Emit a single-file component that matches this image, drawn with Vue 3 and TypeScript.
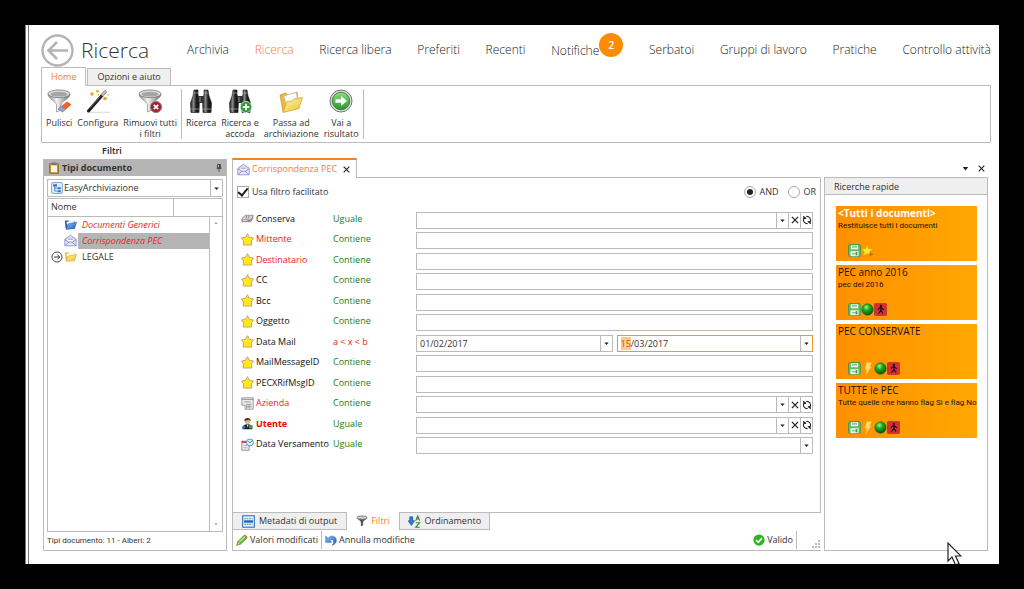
<script setup lang="ts">
import { onMounted, ref } from 'vue'

interface RibbonAction { icon: string; lines: string[] }
interface FilterRow {
  id: string
  label: string
  icon: string
  operator: string
  kind: 'text' | 'lookup' | 'drop' | 'range'
  tone?: 'red' | 'strong'
}
interface QuickSearch { title: string; note: string; icons: string[]; bold?: boolean }

const navBefore = ['Archivia', 'Ricerca', 'Ricerca libera', 'Preferiti', 'Recenti']
const navAfter = ['Serbatoi', 'Gruppi di lavoro', 'Pratiche', 'Controllo attività']

const ribbon: RibbonAction[][] = [
  [
    { icon: 'funnel-clean', lines: ['Pulisci'] },
    { icon: 'wand', lines: ['Configura'] },
    { icon: 'funnel-remove', lines: ['Rimuovi tutti', 'i filtri'] },
  ],
  [
    { icon: 'binoculars', lines: ['Ricerca'] },
    { icon: 'binoculars-add', lines: ['Ricerca e', 'accoda'] },
    { icon: 'folder-open', lines: ['Passa ad', 'archiviazione'] },
    { icon: 'go', lines: ['Vai a', 'risultato'] },
  ],
]

const tree = [
  { name: 'Documenti Generici', icon: 'folder-blue', red: true, selected: false, expandable: false },
  { name: 'Corrispondenza PEC', icon: 'mail', red: true, selected: true, expandable: false },
  { name: 'LEGALE', icon: 'folder-small', red: false, selected: false, expandable: true },
]

const filters: FilterRow[] = [
  { id: 'conserva', label: 'Conserva', icon: 'drive', operator: 'Uguale', kind: 'lookup' },
  { id: 'mittente', label: 'Mittente', icon: 'star', operator: 'Contiene', kind: 'text', tone: 'red' },
  { id: 'destinatario', label: 'Destinatario', icon: 'star', operator: 'Contiene', kind: 'text', tone: 'red' },
  { id: 'cc', label: 'CC', icon: 'star', operator: 'Contiene', kind: 'text' },
  { id: 'bcc', label: 'Bcc', icon: 'star', operator: 'Contiene', kind: 'text' },
  { id: 'oggetto', label: 'Oggetto', icon: 'star', operator: 'Contiene', kind: 'text' },
  { id: 'datamail', label: 'Data Mail', icon: 'star', operator: 'a < x < b', kind: 'range' },
  { id: 'messageid', label: 'MailMessageID', icon: 'star', operator: 'Contiene', kind: 'text' },
  { id: 'rifmsgid', label: 'PECXRifMsgID', icon: 'star', operator: 'Contiene', kind: 'text' },
  { id: 'azienda', label: 'Azienda', icon: 'form', operator: 'Contiene', kind: 'lookup', tone: 'red' },
  { id: 'utente', label: 'Utente', icon: 'user', operator: 'Uguale', kind: 'lookup', tone: 'strong' },
  { id: 'versamento', label: 'Data Versamento', icon: 'date', operator: 'Uguale', kind: 'drop' },
]

const quick: QuickSearch[] = [
  { title: '<Tutti i documenti>', note: 'Restituisce tutti i documenti', icons: ['save', 'star-add'], bold: true },
  { title: 'PEC anno 2016', note: 'pec del 2016', icons: ['save', 'ball', 'exit'] },
  { title: 'PEC CONSERVATE', note: '', icons: ['save', 'bolt', 'ball', 'exit'] },
  { title: 'TUTTE le PEC', note: 'Tutte quelle che hanno flag Sì e flag No', icons: ['save', 'bolt', 'ball', 'exit'] },
]

const easyFilter = ref(true)
const mode = ref<'AND' | 'OR'>('AND')
const dateFrom = ref('01/02/2017')
const dateTo = ref('15/03/2017')
const dateToInput = ref<HTMLInputElement[]>([])

onMounted(() => {
  const field = dateToInput.value[0]
  field?.focus()
  field?.setSelectionRange(0, 2)
})
</script>

<template>
  <svg class="defs" aria-hidden="true">
    <defs>
      <linearGradient id="g-metal" x1="0" x2="1" y1="0" y2="0">
        <stop offset="0" stop-color="#8a8a8a" /><stop offset=".4" stop-color="#f4f4f4" /><stop offset="1" stop-color="#6a6a6a" />
      </linearGradient>
      <linearGradient id="g-folder" x1="0" x2="1" y1="0" y2="1">
        <stop offset="0" stop-color="#fff3a0" /><stop offset="1" stop-color="#edc23c" />
      </linearGradient>
      <linearGradient id="g-blue" x1="0" x2="1" y1="0" y2="1">
        <stop offset="0" stop-color="#8fc4f2" /><stop offset="1" stop-color="#1f58b5" />
      </linearGradient>
      <linearGradient id="g-dark" x1="0" x2="1" y1="0" y2="0">
        <stop offset="0" stop-color="#1d1d1d" /><stop offset=".35" stop-color="#8a8a8a" /><stop offset=".6" stop-color="#222" /><stop offset="1" stop-color="#111" />
      </linearGradient>
      <radialGradient id="g-ball" cx=".4" cy=".3" r=".7">
        <stop offset="0" stop-color="#a8f08a" /><stop offset=".4" stop-color="#1fae1f" /><stop offset="1" stop-color="#04580a" />
      </radialGradient>
      <linearGradient id="g-go" x1="0" x2="0" y1="0" y2="1">
        <stop offset="0" stop-color="#8ede7d" /><stop offset="1" stop-color="#279332" />
      </linearGradient>
    </defs>
    <symbol id="funnel" viewBox="0 0 24 24">
      <path d="M1 5C1 10 9 12 9.500 16V23L14 21V16C14 12 23 10 23 5Z" fill="url(#g-metal)" stroke="#777" stroke-width=".6" />
      <ellipse cx="12" cy="4.800" rx="11" ry="3.800" fill="#e0e0e0" stroke="#777" stroke-width=".8" />
      <ellipse cx="12" cy="5.200" rx="8.500" ry="2.400" fill="#a5a5a5" />
    </symbol>
    <symbol id="funnel-clean" viewBox="0 0 24 24">
      <use href="#funnel" />
      <path d="M11 20L20 13L24 15.500L15.500 23Z" fill="#f0652a" stroke="#c44312" stroke-width=".6" />
      <path d="M11 20L14 17.600L18.500 20.300L15.500 23Z" fill="#7fa6dd" />
    </symbol>
    <symbol id="wand" viewBox="0 0 24 24">
      <path d="M3 23.300H24" stroke="#ddd" stroke-width="1.200" />
      <path d="M2.500 22L19 3" stroke="#1c1c1c" stroke-width="3" stroke-linecap="round" />
      <path d="M16 6.500L20 1.500" stroke="#b9b9b9" stroke-width="3" />
      <path d="M4.500 18.500L15 6.500" stroke="#777" stroke-width=".8" />
      <g fill="#f0a31c"><circle cx="6" cy="5" r="1.700" /><circle cx="11.500" cy="2.300" r="1.300" /><circle cx="19" cy="9.500" r="1.800" /><circle cx="12.500" cy="5.700" r=".8" /><circle cx="22" cy="6" r=".8" /></g>
    </symbol>
    <symbol id="funnel-remove" viewBox="0 0 24 24">
      <use href="#funnel" />
      <circle cx="18" cy="18" r="5.600" fill="#a3222e" stroke="#888" stroke-width="1" />
      <path d="M15.800 15.800L20.200 20.200M20.200 15.800L15.800 20.200" stroke="#fff" stroke-width="1.700" />
    </symbol>
    <symbol id="binoculars" viewBox="0 0 24 24">
      <path d="M5 1H9V6L10.500 9L10 23.500H2L1.500 14L4 7Z" fill="url(#g-dark)" stroke="#111" stroke-width=".6" />
      <path d="M19 1H15V6L13.500 9L14 23.500H22L22.500 14L20 7Z" fill="url(#g-dark)" stroke="#111" stroke-width=".6" />
      <path d="M9.500 7H14.500V14H9.500Z" fill="#333" /><path d="M11 8V13" stroke="#aaa" stroke-width=".8" />
      <path d="M4.500 4H9.500M14.500 4H19.500M2 20H10M14 20H22" stroke="#aaa" stroke-width=".7" />
    </symbol>
    <symbol id="binoculars-add" viewBox="0 0 24 24">
      <use href="#binoculars" />
      <circle cx="18" cy="18" r="5.600" fill="#2f9a38" stroke="#b8dcb8" stroke-width="1" />
      <path d="M18 14.800V21.200M14.800 18H21.200" stroke="#fff" stroke-width="1.800" />
    </symbol>
    <symbol id="folder-open" viewBox="0 0 24 24">
      <path d="M1 6L7 4L9 6L18 3L20 19L4 23Z" fill="#e9bb3c" stroke="#c99a28" stroke-width=".7" />
      <path d="M5 7L17 3.500L19 13L8 18Z" fill="#fff" stroke="#bbb" stroke-width=".6" />
      <path d="M4 23.500L8 12.500L13 12L15 10L23.500 8.500L20 19.500Z" fill="url(#g-folder)" stroke="#d0a42c" stroke-width=".7" />
    </symbol>
    <symbol id="go" viewBox="0 0 24 24">
      <circle cx="12" cy="12" r="11" fill="#dedede" stroke="#777" stroke-width="1" />
      <circle cx="12" cy="12" r="8.800" fill="url(#g-go)" stroke="#34753a" stroke-width=".8" />
      <path d="M6.500 10.300H12V7L18 12L12 17V13.700H6.500Z" fill="#fff" />
    </symbol>
    <symbol id="clipboard" viewBox="0 0 16 16">
      <rect x="2" y="2" width="12" height="13.500" rx="1" fill="#c98f35" stroke="#85601f" />
      <path d="M4 4.500H12V13.500H4Z" fill="#fff6d8" /><rect x="5" y=".5" width="6" height="3.500" rx="1" fill="#777" />
    </symbol>
    <symbol id="hierarchy" viewBox="0 0 16 16">
      <rect x=".7" y=".7" width="14.600" height="14.600" rx="2" fill="#dcecfb" stroke="#5a92cc" />
      <path d="M5 5V12H9M5 8H9" stroke="#3973b6" fill="none" /><path d="M3 3H8V6H3ZM9 7H13V9.500H9ZM9 11H13V13.500H9Z" fill="#3973b6" />
    </symbol>
    <symbol id="folder-blue" viewBox="0 0 16 16">
      <path d="M1 3H6L7 4H13V13H2Z" fill="#2a5fb0" /><path d="M3 5L12 2L13 8L4 9Z" fill="#eaf3ff" />
      <path d="M2.500 14L5 7.500L15.500 5L13 13Z" fill="url(#g-blue)" stroke="#2355a0" stroke-width=".6" />
    </symbol>
    <symbol id="folder-small" viewBox="0 0 16 16">
      <path d="M1 3H6L7 4H13V13H2Z" fill="#e8bd48" /><path d="M3 5L12 2.500L13 8L4 9Z" fill="#fffbe5" />
      <path d="M2.500 14L5 7.500L15.500 5.500L13 13Z" fill="url(#g-folder)" stroke="#d0a42c" stroke-width=".7" />
    </symbol>
    <symbol id="mail" viewBox="0 0 16 16">
      <path d="M1 6.500L8 1.500L15 6.500V14.500H1Z" fill="#e7e9fb" stroke="#8286c6" />
      <path d="M3.500 9V5H12.500V9L8 11Z" fill="#fff" stroke="#a5a8d8" stroke-width=".7" />
      <path d="M1.500 14L6.500 9.800H9.500L14.500 14M1.300 7L6 10.200M14.700 7L10 10.200M5 6.500H11" fill="none" stroke="#8286c6" />
    </symbol>
    <symbol id="expand" viewBox="0 0 16 16">
      <circle cx="8" cy="8" r="6.700" fill="#fff" stroke="#333" stroke-width="1.200" />
      <path d="M4 8H11.500M8.500 4.800L11.700 8L8.500 11.200" fill="none" stroke="#333" stroke-width="1.300" />
    </symbol>
    <symbol id="drive" viewBox="0 0 16 16">
      <path d="M1 9L5 4H15L14.500 8L12 12H1Z" fill="#a59ea3" stroke="#746d72" stroke-width=".7" /><path d="M1.500 9L5 4.500H14.500L11.500 9Z" fill="#d9d3d6" />
      <path d="M7 5L6 8M10 5L8.500 8" stroke="#857c82" /><path d="M2.500 10.500H7" stroke="#eee" /><circle cx="10" cy="10.500" r=".8" fill="#b44" />
    </symbol>
    <symbol id="star" viewBox="0 0 16 16">
      <path d="M8 .8L10.300 5.200L15.400 6.200L12.800 9.800L13.300 14.800H2.700L3.200 9.800L.6 6.200L5.700 5.200Z" fill="#ffe81c" stroke="#c09a78" stroke-width="1.100" stroke-linejoin="round" />
    </symbol>
    <symbol id="form" viewBox="0 0 16 16">
      <path d="M1 1H15V15H5V10H1Z" fill="#eee" stroke="#888" /><path d="M1 3H15M4 6H12M7 9H13M7 12H13M7 9V14M10 9V14" stroke="#888" />
    </symbol>
    <symbol id="user" viewBox="0 0 16 16">
      <path d="M2 15C2 10 5 9 8 9S14 10 14 15Z" fill="#17212b" /><circle cx="8" cy="5" r="3.600" fill="#e8b184" />
      <path d="M4 5C4 0 12 0 12 5L9.500 3.500Z" fill="#4a2d17" /><path d="M7 9.500H9L8.500 13Z" fill="#fff" />
      <circle cx="12" cy="12" r="2.500" fill="#3ba045" /><circle cx="3.500" cy="12.500" r="2" fill="#2c74b8" />
    </symbol>
    <symbol id="date" viewBox="0 0 16 16">
      <path d="M1 4H10V15H1Z" fill="#f7eef1" stroke="#777" /><path d="M1 5H9" stroke="#c33" stroke-width="2" /><path d="M3 9H8M3 12H8" stroke="#999" />
      <circle cx="11" cy="5.500" r="4.300" fill="#d9edfa" stroke="#4a86a5" /><path d="M9 4L11 6L14 3" fill="none" stroke="#28576f" />
    </symbol>
    <symbol id="refresh" viewBox="0 0 16 16">
      <path d="M13.500 10A6 6 0 0 0 7 2.300M2.500 6A6 6 0 0 0 9 13.700" fill="none" stroke="#222" stroke-width="1.700" />
      <path d="M2 1.500V7L7.500 5.500ZM14 14.500V9L8.500 10.500Z" fill="#222" /><path d="M2 2L6 5M14 14L10 11" stroke="#222" stroke-width="1.400" />
    </symbol>
    <symbol id="cross" viewBox="0 0 16 16"><path d="M3 3L13 13M13 3L3 13" stroke="#222" stroke-width="2" /></symbol>
    <symbol id="caret" viewBox="0 0 16 16"><path d="M3 5.500H13L8 11.500Z" fill="#222" /></symbol>
    <symbol id="pin" viewBox="0 0 16 16"><path d="M5 1H11V8H5ZM9 1V8M3 8.500H13M8 9V15" fill="none" stroke="#333" stroke-width="1.600" /></symbol>
    <symbol id="save" viewBox="0 0 16 16">
      <rect x=".7" y=".7" width="14.600" height="14.600" rx="1.500" fill="#62bd66" stroke="#3f9146" />
      <path d="M3.500 1.500H12.500V6.500H3.500ZM3 9H13V15H3Z" fill="#e9f8e6" /><path d="M5 3.500H11M5 12H11" stroke="#6fb074" stroke-width="1.500" /><path d="M9.500 10H11.500V14H9.500Z" fill="#4c8c50" />
    </symbol>
    <symbol id="star-add" viewBox="0 0 16 16">
      <path d="M7.500 1L9.500 5.800L14.500 6.200L10.700 9.500L12 14.500L7.500 11.700L3 14.500L4.300 9.500L.5 6.200L5.500 5.800Z" fill="#ffe62b" stroke="#e4a407" stroke-width=".7" />
      <path d="M12 10V15M9.500 12.500H14.500" stroke="#a36b14" stroke-width="1.300" />
    </symbol>
    <symbol id="ball" viewBox="0 0 16 16"><circle cx="8" cy="8" r="7" fill="url(#g-ball)" stroke="#0a5a10" stroke-width=".6" /></symbol>
    <symbol id="exit" viewBox="0 0 16 16">
      <rect x=".5" y=".5" width="15" height="15" rx="1.500" fill="#d72d35" stroke="#b5303a" />
      <circle cx="8.500" cy="3.600" r="1.400" fill="#111" /><path d="M8.500 5V9L5.500 13M8.500 9L11 13M5 8.500L6.500 6.200H9.500L12 8.500" fill="none" stroke="#111" stroke-width="1.400" />
    </symbol>
    <symbol id="bolt" viewBox="0 0 16 16"><path d="M7 1H13L10.500 6H12.500L6 15.500L7.500 9H5Z" fill="#ffdf70" stroke="#f5c350" stroke-width=".7" /></symbol>
    <symbol id="sheet" viewBox="0 0 16 16">
      <rect x=".8" y="1" width="14.400" height="14" fill="#eaf4fd" stroke="#2a6cb8" stroke-width="1.300" />
      <path d="M3 4.500H13M3 11.500H13" stroke="#4a8a62" stroke-width="1.300" stroke-dasharray="2 1" /><path d="M2.500 8H13.500" stroke="#2364c0" stroke-width="3" />
    </symbol>
    <symbol id="funnel-small" viewBox="0 0 16 16">
      <path d="M1 3C2 7 6 7 6.500 9.500V15L9.500 13.500V9.500C10 7 14 7 15 3Z" fill="#555" /><ellipse cx="8" cy="3.500" rx="7" ry="2.300" fill="#ccc" stroke="#666" />
    </symbol>
    <symbol id="sort" viewBox="0 0 16 16">
      <path d="M2 2H6V7H8.500L4 13L0 7H2Z" fill="#2f76cc" stroke="#1b4f94" stroke-width=".6" />
      <path d="M9.500 7L12 1L14.500 7M10.500 5H13.500" fill="none" stroke="#2c8a35" stroke-width="1.300" /><path d="M9.500 9.500H14.500L9.500 15H14.500" fill="none" stroke="#2c8a35" stroke-width="1.300" />
    </symbol>
    <symbol id="pencil" viewBox="0 0 16 16">
      <path d="M1 15L2.500 10L10.500 2L14.500 5.500L6 13.500Z" fill="#65c33c" stroke="#3b7f20" stroke-width=".8" /><path d="M10.500 2L12 .8L15.500 4L14.500 5.500Z" fill="#e35b55" />
      <path d="M1 15L2.500 10L6 13.500Z" fill="#f0c98a" stroke="#8a5a24" stroke-width=".6" /><path d="M4.500 10.500L12 3.500" stroke="#b9f08c" stroke-width="1.400" />
    </symbol>
    <symbol id="undo" viewBox="0 0 16 16">
      <path d="M1 3V11H9L6.500 8.500C8 6.500 11 7 11.500 9.500C12 12 11 13.500 9.500 15C14 13.500 15.800 10.500 14.800 7C13.500 2 7.500 1.500 4 5.800Z" fill="url(#g-blue)" stroke="#235ca5" stroke-width=".8" />
    </symbol>
    <symbol id="valid" viewBox="0 0 16 16">
      <circle cx="8" cy="8" r="7.500" fill="#2fb41f" /><path d="M4 8L7 11L12 5.500" fill="none" stroke="#fff" stroke-width="2.200" />
    </symbol>
  </svg>

  <div class="screen">
    <div class="window">
      <header class="top">
        <button class="back" type="button" aria-label="Indietro">
          <svg viewBox="0 0 33 33">
            <circle cx="16.500" cy="16.500" r="15" fill="none" stroke="#b4b4b4" stroke-width="2.400" />
            <path d="M27 16.500H8M16 8L7.500 16.500L16 25" fill="none" stroke="#b4b4b4" stroke-width="2.600" />
          </svg>
        </button>
        <h1>Ricerca</h1>
        <nav>
          <a v-for="item in navBefore" :key="item" href="#" :class="{ current: item === 'Ricerca' }">{{ item }}</a>
          <span class="notify"><a href="#">Notifiche</a><span class="badge">2</span></span>
          <a v-for="item in navAfter" :key="item" href="#">{{ item }}</a>
        </nav>
      </header>

      <div class="ribbon-tabs">
        <button type="button" class="rtab active">Home</button>
        <button type="button" class="rtab">Opzioni e aiuto</button>
      </div>
      <div class="ribbon">
        <div v-for="(group, g) in ribbon" :key="g" class="group">
          <button v-for="action in group" :key="action.icon" type="button" class="action">
            <svg><use :href="'#' + action.icon" /></svg>
            <span v-for="line in action.lines" :key="line">{{ line }}</span>
          </button>
        </div>
      </div>
      <div class="ribbon-caption">Filtri</div>

      <main>
        <aside class="types">
          <h2><svg class="i12"><use href="#clipboard" /></svg>Tipi documento<svg class="pin"><use href="#pin" /></svg></h2>
          <div class="types-body">
            <div class="combo">
              <svg class="i12"><use href="#hierarchy" /></svg>
              <select aria-label="Archivio"><option>EasyArchiviazione</option></select>
              <span class="drop"><svg><use href="#caret" /></svg></span>
            </div>
            <div class="tree">
              <table>
                <thead><tr><th>Nome</th><th class="extra"></th></tr></thead>
                <tbody>
                  <tr v-for="node in tree" :key="node.name">
                    <td colspan="2">
                      <div class="node">
                        <span class="toggle"><svg v-if="node.expandable" class="i12"><use href="#expand" /></svg></span>
                        <svg class="i13"><use :href="'#' + node.icon" /></svg>
                        <span class="name" :class="{ red: node.red, selected: node.selected }">{{ node.name }}</span>
                      </div>
                    </td>
                  </tr>
                </tbody>
              </table>
              <div class="scroll"><i class="up"></i><i class="down"></i></div>
            </div>
            <p class="count">Tipi documento: 11 - Alberi: 2</p>
          </div>
        </aside>

        <section class="dock">
          <div class="doc-tabs">
            <div class="doc-tab">
              <svg class="i13"><use href="#mail" /></svg><span>Corrispondenza PEC</span>
              <button type="button" aria-label="Chiudi scheda"><svg><use href="#cross" /></svg></button>
            </div>
            <div class="doc-tools">
              <button type="button" aria-label="Elenco schede"><svg><use href="#caret" /></svg></button>
              <button type="button" aria-label="Chiudi"><svg><use href="#cross" /></svg></button>
            </div>
          </div>

          <div class="dock-body">
            <div class="document">
              <form class="page" @submit.prevent>
                <div class="options">
                  <label><input v-model="easyFilter" type="checkbox" />Usa filtro facilitato</label>
                  <span class="modes">
                    <label><input v-model="mode" type="radio" name="mode" value="AND" />AND</label>
                    <label><input v-model="mode" type="radio" name="mode" value="OR" />OR</label>
                  </span>
                </div>
                <div class="filters">
                  <div v-for="row in filters" :key="row.id" class="filter">
                    <label :for="row.id" :class="row.tone"><svg class="i13"><use :href="'#' + row.icon" /></svg>{{ row.label }}</label>
                    <span class="operator" :class="{ red: row.kind === 'range' }">{{ row.operator }}</span>
                    <div v-if="row.kind === 'range'" class="range">
                      <div class="field">
                        <input :id="row.id" v-model="dateFrom" type="text" />
                        <button type="button" aria-label="Apri calendario iniziale"><svg><use href="#caret" /></svg></button>
                      </div>
                      <div class="field focused">
                        <input ref="dateToInput" v-model="dateTo" type="text" aria-label="Data Mail finale" />
                        <button type="button" aria-label="Apri calendario finale"><svg><use href="#caret" /></svg></button>
                      </div>
                    </div>
                    <div v-else class="field">
                      <input :id="row.id" type="text" />
                      <button v-if="row.kind !== 'text'" type="button" :aria-label="'Apri ' + row.label"><svg><use href="#caret" /></svg></button>
                      <template v-if="row.kind === 'lookup'">
                        <button type="button" :aria-label="'Svuota ' + row.label"><svg class="big"><use href="#cross" /></svg></button>
                        <button type="button" :aria-label="'Aggiorna ' + row.label"><svg class="big"><use href="#refresh" /></svg></button>
                      </template>
                    </div>
                  </div>
                </div>
              </form>
              <div class="page-tabs">
                <button type="button" class="wide"><svg class="i13"><use href="#sheet" /></svg>Metadati di output</button>
                <button type="button" class="active"><svg class="i12"><use href="#funnel-small" /></svg>Filtri</button>
                <button type="button"><svg class="i13"><use href="#sort" /></svg>Ordinamento</button>
              </div>
              <footer class="status">
                <button type="button"><svg class="i12"><use href="#pencil" /></svg>Valori modificati</button>
                <button type="button"><svg class="i12"><use href="#undo" /></svg>Annulla modifiche</button>
                <span class="valid"><svg class="i12"><use href="#valid" /></svg>Valido</span>
                <svg class="grip" viewBox="0 0 9 9"><path d="M7 0H9V2H7ZM7 3H9V5H7ZM7 6H9V8H7ZM4 3H6V5H4ZM4 6H6V8H4ZM1 6H3V8H1Z" fill="#bbb" /></svg>
              </footer>
            </div>

            <aside class="quick">
              <h2>Ricerche rapide</h2>
              <div class="cards">
                <article v-for="card in quick" :key="card.title">
                  <h3 :class="{ bold: card.bold }">{{ card.title }}</h3>
                  <p>{{ card.note }}</p>
                  <div class="tools"><svg v-for="icon in card.icons" :key="icon"><use :href="'#' + icon" /></svg></div>
                </article>
              </div>
            </aside>
          </div>
        </section>
      </main>

      <svg class="pointer" viewBox="0 0 15 24"><path d="M1 1V19L5 15L8.500 23L12 21.500L8.500 14H14Z" fill="#fff" stroke="#222" stroke-width="1.200" /></svg>
    </div>
  </div>
</template>

<style>
html, body { background: #000; }
</style>

<style scoped>
* { box-sizing: border-box; }
.defs { position: absolute; width: 0; height: 0; }
.screen {
  height: 100vh; padding: 25px; overflow: hidden; background: #000; color: #333;
  font: 9px/12px "Open Sans", "Noto Sans", sans-serif;
}
.window {
  position: relative; display: flex; flex-direction: column; height: 100%; overflow: hidden;
  padding: 8px 8px 13px 12px; background: #fff; border-left: 4px double #777;
}
button, input, select { font: inherit; color: inherit; margin: 0; padding: 0; border: 0; background: none; }
button svg { display: block; }
h1, h2, h3, p { margin: 0; font-weight: 400; }
svg { flex: none; }
.i12 { width: 12px; height: 12px; }
.i13 { width: 13px; height: 13px; }

.top { display: flex; align-items: center; height: 34px; flex: none; }
.back { width: 33px; height: 33px; flex: none; }
.back svg { width: 33px; height: 33px; }
h1 { width: 113px; padding-left: 7px; font-size: 21px; line-height: 32px; font-weight: 300; color: #333; }
nav { flex: 1; display: flex; justify-content: space-between; align-items: center; font-size: 12px; line-height: 18px; font-weight: 300; white-space: nowrap; }
nav a { color: #222; text-decoration: none; }
nav a.current { color: #f58220; }
.notify { display: flex; align-items: center; }
.badge { width: 24px; height: 24px; margin-bottom: 10px; border-radius: 50%; background: #ff8c00; color: #fff; font-size: 10px; line-height: 24px; font-weight: 600; text-align: center; }
.notify a { padding-top: 1px; }

.ribbon-tabs { display: flex; flex: none; align-items: flex-end; height: 19px; position: relative; z-index: 1; margin-bottom: -1px; }
.rtab { height: 18px; padding: 0 9px; border: 1px solid #bbb; background: #efefef; }
.rtab.active { height: 19px; margin-right: 1px; background: #fff; border-bottom-color: #fff; color: #f58220; }
.ribbon { display: flex; flex: none; height: 58px; border: 1px solid #bbb; }
.group { display: flex; align-items: flex-start; gap: 5px; margin: 3px 0; padding: 0 4px; border-right: 1px solid #bbb; }
.action { display: flex; flex-direction: column; align-items: center; height: 50px; line-height: 11px; white-space: nowrap; }
.action svg { width: 24px; height: 24px; margin-bottom: 4px; }
.ribbon-caption { flex: none; width: 142px; height: 15px; line-height: 15px; font-weight: 600; text-align: center; color: #222; }

main { flex: 1; min-height: 0; display: flex; gap: 5px; padding: 0 3px 0 2px; }
.types { width: 184px; flex: none; margin-top: 1px; display: flex; flex-direction: column; border: 1px solid #bbb; }
.types h2 { display: flex; align-items: center; gap: 2px; height: 16px; padding: 0 3px 0 4px; background: #b4b4b4; font-size: 9px; font-weight: 700; }
.pin { width: 8px; height: 8px; margin-left: auto; }
.types-body { flex: 1; min-height: 0; display: flex; flex-direction: column; padding: 3px; }
.combo { display: flex; align-items: center; height: 18px; margin-bottom: 1px; padding-left: 3px; border: 1px solid #bbb; flex: none; }
select { flex: 1; min-width: 0; height: 16px; padding-left: 1px; appearance: none; }
.drop { display: grid; place-items: center; width: 12px; height: 16px; border-left: 1px solid #bbb; }
.drop svg, .field button svg { width: 7px; height: 7px; }
.tree { position: relative; flex: 1; border: 1px solid #bbb; }
table { width: 100%; border-collapse: collapse; table-layout: fixed; }
th { height: 17px; padding: 0 3px; border-bottom: 1px solid #bbb; font-weight: 400; text-align: left; }
th.extra { width: 49px; border-left: 1px solid #bbb; }
td { padding: 0 13px 0 0; }
.node { display: flex; align-items: center; height: 16px; padding-left: 3px; }
.toggle { width: 13px; height: 12px; }
.name { flex: 1; height: 16px; line-height: 16px; margin-left: 1px; padding-left: 4px; }
.name.red { color: #ee1c25; font-style: italic; }
.name.selected { background: #b4b4b4; }
.scroll { position: absolute; top: 17px; right: 0; bottom: 0; width: 13px; border-left: 1px solid #bbb; display: flex; flex-direction: column; align-items: center; justify-content: space-between; padding: 6px 0; }
.scroll i { border: 2px solid transparent; }
.scroll .up { border-bottom-color: #aaa; border-top: 0; }
.scroll .down { border-top-color: #aaa; border-bottom: 0; }
.count { height: 15px; padding-top: 2px; font: 8px/13px Roboto, "Open Sans", sans-serif; flex: none; }

.dock { flex: 1; min-width: 0; display: flex; flex-direction: column; }
.doc-tabs { display: flex; justify-content: space-between; height: 20px; flex: none; margin-bottom: -1px; position: relative; z-index: 1; }
.doc-tab { display: flex; align-items: center; gap: 2px; width: 125px; padding: 0 5px 0 4px; border: 1px solid #bbb; border-top: 2px solid #f58220; border-bottom: 0; background: #fff; color: #f58220; white-space: nowrap; }
.doc-tab button { margin-left: auto; }
.doc-tab button svg, .doc-tools svg { width: 9px; height: 9px; }
.doc-tools { display: flex; gap: 7px; align-items: center; padding-right: 2px; }
.dock-body { flex: 1; min-height: 0; display: flex; gap: 3px; }
.document { flex: 1; min-width: 0; display: flex; flex-direction: column; border: solid #bbb; border-width: 0 0 1px 1px; }
.page { flex: 1; min-height: 0; border: solid #bbb; border-width: 1px 1px 1px 0; padding: 6px 7px 0 4px; }
.options { display: flex; justify-content: space-between; height: 16px; margin-bottom: 10px; }
.options label { display: flex; align-items: center; gap: 3px; }
.modes { display: flex; gap: 10px; margin-right: -3px; }
.options input { appearance: none; flex: none; width: 12px; height: 12px; border: 1px solid #aaa; background: #fff; display: grid; place-items: center; }
.options input[type="radio"] { border-radius: 50%; }
.options input[type="radio"]:checked::after { content: ""; width: 6px; height: 6px; border-radius: 50%; background: #222; }
.options input[type="checkbox"]:checked::after { content: ""; width: 4px; height: 8px; margin-top: -2px; border: solid #222; border-width: 0 2px 2px 0; transform: rotate(40deg); }
.filters { display: grid; grid-auto-rows: 1fr; height: 246px; padding-left: 4px; }
.filter { display: grid; grid-template-columns: 92px 83px 1fr; align-items: center; }
.filter > label { display: flex; align-items: center; gap: 2px; padding-bottom: 3px; color: #111; white-space: nowrap; }
.filter > .red { color: #f01820; }
.filter > .strong { color: #f00000; font-weight: 700; }
.operator { padding-bottom: 3px; color: #168016; }
.range { display: grid; grid-template-columns: 1fr 1fr; gap: 4px; }
.field { display: flex; height: 17px; border: 1px solid #bbb; background: #fff; min-width: 0; }
.field input { flex: 1; min-width: 0; padding: 0 3px; outline: none; height: 15px; }
.field button { display: grid; place-items: center; width: 12px; border-left: 1px solid #bbb; flex: none; }
.field button svg.big { width: 10px; height: 10px; }
.field.focused { border-color: #f3952b; }
.focused input::selection { background: #ffc98a; color: #a0622a; }
.page-tabs { display: flex; flex: none; height: 18px; margin-top: -1px; }
.page-tabs button { display: flex; align-items: center; gap: 4px; padding: 0 8px; background: #efefef; border: 1px solid #bbb; }
.page-tabs .wide { padding: 0 9px; border-left: 0; }
.page-tabs .active { gap: 3px; background: #fff; border-color: #fff; color: #f58220; }
.status { display: flex; flex: none; height: 20px; align-items: center; padding: 1px 1px 1px 3px; }
.status button, .valid { display: flex; align-items: center; gap: 2px; height: 18px; }
.status button:first-child, .valid { padding-right: 3px; margin-right: 3px; border-right: 1px solid #bbb; }
.valid { margin-left: auto; margin-right: 14px; }
.grip { width: 9px; height: 9px; align-self: flex-end; }

.quick { width: 164px; flex: none; border: 1px solid #bbb; }
.quick h2 { height: 17px; padding-left: 9px; line-height: 17px; font-size: 9px; background: #efefef; border-bottom: 1px solid #bbb; }
.cards { display: grid; gap: 4px; padding: 11px; }
article { height: 55px; padding: 1px 0 1px 2px; background: linear-gradient(90deg, #ff9000, #ffa800); color: #1c1000; white-space: nowrap; }
h3 { font-size: 10px; line-height: 13px; }
h3.bold { color: #fff; font-weight: 700; }
article p { height: 12px; font: 8px/12px Roboto, "Open Sans", sans-serif; }
.tools { display: flex; padding: 12px 0 0 10px; }
.tools svg { width: 13px; height: 13px; }
.pointer { position: absolute; right: 37px; bottom: -2px; width: 15px; height: 24px; }
</style>
